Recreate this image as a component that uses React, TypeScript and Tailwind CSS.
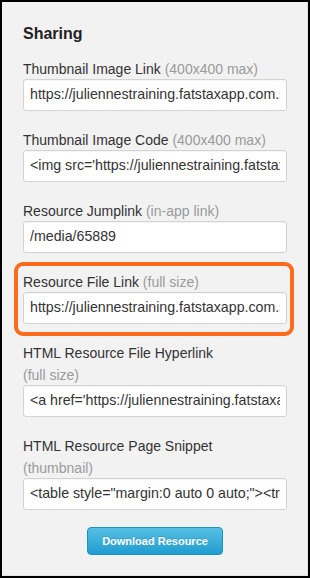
const FIELDS = [
  { label: 'Thumbnail Image Link', note: '(400x400 max)', value: 'https://juliennestraining.fatstaxapp.com.s3.amazonaws.com/media/65889/thumbnail' },
  { label: 'Thumbnail Image Code', note: '(400x400 max)', value: "<img src='https://juliennestraining.fatstaxapp.com.s3.amazonaws.com/media/65889/thumbnail'>" },
  { label: 'Resource Jumplink', note: '(in-app link)', value: '/media/65889' },
  { label: 'Resource File Link', note: '(full size)', value: 'https://juliennestraining.fatstaxapp.com.s3.amazonaws.com/media/65889/file', highlight: true },
  { label: 'HTML Resource File Hyperlink', note: '(full size)', value: "<a href='https://juliennestraining.fatstaxapp.com.s3.amazonaws.com/media/65889/file'>", wrap: true },
  { label: 'HTML Resource Page Snippet', note: '(thumbnail)', value: '<table style="margin:0 auto 0 auto;"><tr><td>', wrap: true },
]

function Field({ label, note, value, highlight, wrap }: { label: string; note: string; value: string; highlight?: boolean; wrap?: boolean }) {
  return (
    <div className="relative flex flex-col">
      {/* annotation ring drawn over the field */}
      {highlight && (
        <div className="pointer-events-none absolute -left-[9px] -right-[7px] -top-[9px] -bottom-[12px] rounded-[9px] border-[4px] border-[#fc6a1b]" />
      )}
      <div className="text-[14px] leading-[22px] text-[#333]">
        {label}
        {wrap ? <br /> : ' '}
        <span className="text-[#9a9a9a]">{note}</span>
      </div>
      <div className="-mt-px flex h-[32px] items-center rounded-[3px] border border-[#d2d2d2] bg-white px-[6px] shadow-[inset_0_1px_1px_rgba(0,0,0,0.04)]">
        <div className="min-w-0 flex-1 overflow-hidden whitespace-nowrap text-[14.2px] text-[#333]">{value}</div>
      </div>
    </div>
  )
}

export default function App() {
  return (
    <div className="h-[578px] w-[310px] border-2 border-black bg-[#f2f2f2] font-['Liberation_Sans',Arial,sans-serif]">
      <div className="h-full border-b border-r border-[#e3e3e3] pl-[21px] pr-[20px] pt-[22px]">
        <h2 className="text-[16px] font-bold leading-[20px] text-[#222]">Sharing</h2>
        <div className="mt-[14px] flex flex-col gap-[18px]">
          {FIELDS.map(f => (
            <Field key={f.label} {...f} />
          ))}
        </div>
        <div className="mt-[17px] flex justify-center">
          <button className="h-[28px] w-[136px] rounded-[4px] border border-[#1b93c4] bg-gradient-to-b from-[#55c0e4] to-[#1c9dcf] text-[11px] font-bold text-white [text-shadow:0_-1px_0_rgba(0,0,0,0.15)]">
            Download Resource
          </button>
        </div>
      </div>
    </div>
  )
}
